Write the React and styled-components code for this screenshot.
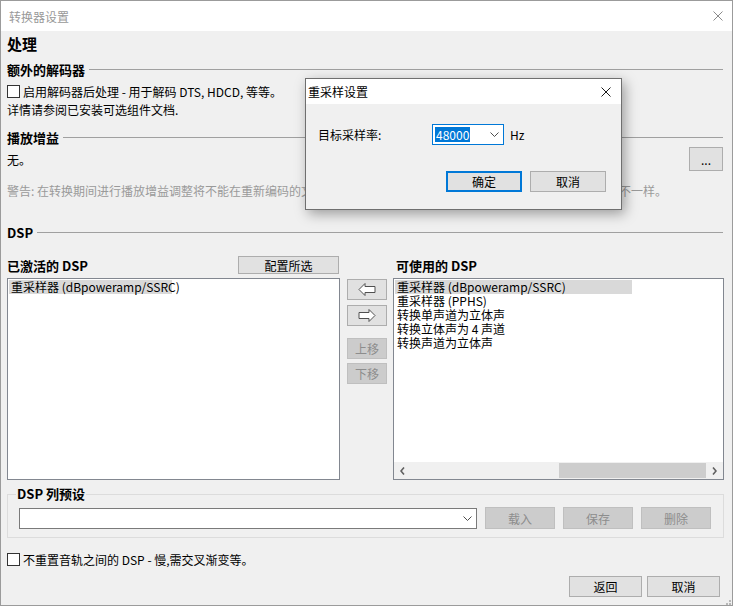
import React from 'react';
import styled, { createGlobalStyle, css } from 'styled-components';

const Global = createGlobalStyle`
  html, body { margin: 0; padding: 0; background: #ffffff; }
  body {
    font-family: "Noto Sans CJK SC", "Liberation Sans", sans-serif;
    font-size: 12px;
    color: #000;
  }
  * { box-sizing: border-box; }
`;

const Window = styled.div`
  position: relative;
  width: 733px;
  height: 606px;
  border: 1px solid #9b9b9b;
  background: #f0f0f0;
  display: flex;
  flex-direction: column;
  overflow: hidden;
`;

const TitleBar = styled.div`
  height: 30px;
  flex: none;
  background: ${p => p.$bg || '#ffffff'};
  display: flex;
  align-items: center;
  justify-content: space-between;
  padding: 0 ${p => p.$pr || 9}px 0 ${p => p.$pl || 8}px;
  color: ${p => p.$color || '#999999'};
  font-size: 12px;
`;

const CloseIcon = ({ color = '#8a8a8a', size = 10 }) => (
  <svg width={size} height={size} viewBox="0 0 10 10">
    <path d="M0.5 0.5 L9.5 9.5 M9.5 0.5 L0.5 9.5" stroke={color} strokeWidth="1" fill="none" />
  </svg>
);

const Body = styled.div`
  flex: 1;
  display: flex;
  flex-direction: column;
  padding: 0 8px 0 6px;
`;

const Heading = styled.div`
  height: 25px;
  line-height: 25px;
  font-size: 15px;
  font-weight: bold;
`;

const SectionHeader = styled.div`
  display: flex;
  align-items: center;
  gap: 4px;
  height: ${p => p.$h || 20}px;
  margin-top: ${p => p.$mt || 0}px;
  font-size: 13px;
  font-weight: bold;
  padding-right: 1px;
  &::after {
    content: '';
    flex: 1;
    height: 1px;
    background: #a0a0a0;
  }
`;

const Row = styled.div`
  display: flex;
  align-items: center;
  height: ${p => p.$h || 16}px;
  margin-top: ${p => p.$mt || 0}px;
  gap: ${p => p.$gap || 0}px;
  color: ${p => p.$muted ? '#9a9a9a' : '#000'};
  white-space: nowrap;
`;

const Spacer = styled.div`
  flex: 1;
`;

const CheckBox = styled.span`
  display: inline-block;
  width: 13px;
  height: 13px;
  border: 1px solid #333333;
  background: #ffffff;
  flex: none;
  margin-right: 3px;
`;

const Btn = styled.button`
  font: inherit;
  font-size: 12px;
  width: ${p => p.$w}px;
  height: ${p => p.$h || 21}px;
  padding: 0;
  margin: 0;
  flex: none;
  display: flex;
  align-items: center;
  justify-content: center;
  background: ${p => p.disabled ? '#cccccc' : '#e1e1e1'};
  border: 1px solid ${p => p.disabled ? '#bfbfbf' : '#adadad'};
  color: ${p => p.disabled ? '#8d8d8d' : '#000'};
  ${p => p.$primary && css`
    border: 2px solid #0078d7;
  `}
`;

const DspArea = styled.div`
  display: grid;
  grid-template-columns: 333px 53px 331px;
`;

const LabelsRow = styled(DspArea)`
  margin-top: 14px;
  height: 18px;
  align-items: center;
`;

const SubLabel = styled.div`
  font-size: 13px;
  font-weight: bold;
  padding-left: ${p => p.$pl || 0}px;
  display: flex;
  align-items: center;
  justify-content: space-between;
  height: 18px;
`;

const ListsRow = styled(DspArea)`
  margin-top: 4px;
  height: 202px;
`;

const ListBox = styled.div`
  height: 202px;
  background: #ffffff;
  border: 1px solid #828790;
  display: flex;
  flex-direction: column;
  overflow: hidden;
`;

const Items = styled.div`
  flex: 1;
  padding: 1px;
`;

const Item = styled.div`
  height: 14px;
  line-height: 14px;
  white-space: nowrap;
  padding-left: 2px;
  width: ${p => p.$w ? `${p.$w}px` : 'auto'};
  background: ${p => p.$sel ? '#d9d9d9' : 'transparent'};
`;

const HScroll = styled.div`
  height: 17px;
  flex: none;
  background: #f0f0f0;
  display: flex;
  align-items: center;
`;

const ScrollArrow = styled.div`
  width: 17px;
  height: 17px;
  flex: none;
  display: flex;
  align-items: center;
  justify-content: center;
`;

const Track = styled.div`
  flex: 1;
  display: flex;
  height: 15px;
`;

const Thumb = styled.div`
  flex: 1;
  background: #cdcdcd;
`;

const MidCol = styled.div`
  display: flex;
  flex-direction: column;
  padding: 1px 6px 0 7px;
`;

const MidBtn = styled(Btn)`
  margin-top: ${p => p.$mt || 0}px;
`;

const GroupBox = styled.fieldset`
  margin: 7px 0 0 0;
  padding: 6px 12px 8px 11px;
  border: 1px solid #dcdcdc;
  min-width: 0;
`;

const Legend = styled.legend`
  font-size: 13px;
  font-weight: bold;
  line-height: 14px;
  padding: 0 1px;
  margin-left: -3px;
`;

const Combo = styled.div`
  display: flex;
  align-items: center;
  width: ${p => p.$w}px;
  height: 21px;
  background: #ffffff;
  border: 1px solid ${p => p.$focus ? '#0078d7' : '#7a7a7a'};
  padding: 0 4px 0 2px;
  flex: none;
`;

const Selected = styled.span`
  background: #0078d7;
  color: #ffffff;
  height: 15px;
  line-height: 15px;
  padding: 0 1px;
`;

const Chevron = () => (
  <svg width="9" height="5" viewBox="0 0 9 5">
    <path d="M0.5 0.5 L4.5 4.5 L8.5 0.5" stroke="#4d4d4d" strokeWidth="1" fill="none" />
  </svg>
);

const ScrollChevron = ({ dir }) => (
  <svg width="5" height="8" viewBox="0 0 5 8">
    <path
      d={dir === 'left' ? 'M4 0.5 L1 4 L4 7.5' : 'M1 0.5 L4 4 L1 7.5'}
      stroke="#606060"
      strokeWidth="1.6"
      fill="none"
    />
  </svg>
);

const HollowArrow = ({ dir }) => (
  <svg width="18" height="13" viewBox="0 0 18 13">
    <polygon
      points={dir === 'left'
        ? '1,6.5 7,0.5 7,3.5 17,3.5 17,9.5 7,9.5 7,12.5'
        : '17,6.5 11,0.5 11,3.5 1,3.5 1,9.5 11,9.5 11,12.5'}
      fill="#ffffff"
      stroke="#505050"
      strokeWidth="1"
    />
  </svg>
);

const PresetRow = styled.div`
  display: flex;
  align-items: center;
  height: 22px;
  gap: 8px;
`;

const Footer = styled.div`
  display: flex;
  justify-content: flex-end;
  gap: 5px;
  margin-top: 9px;
  padding-right: 4px;
`;

const Grip = styled.div`
  position: absolute;
  right: 1px;
  bottom: 1px;
  width: 10px;
  height: 10px;
`;

/* Modal resampler dialog floating above the converter window */
const Dialog = styled.div`
  position: absolute;
  left: 304px;
  top: 77px;
  width: 317px;
  height: 132px;
  background: #f0f0f0;
  border: 1px solid #6f6f6f;
  box-shadow: 3px 4px 12px rgba(0, 0, 0, 0.35);
  display: flex;
  flex-direction: column;
`;

const DialogBar = styled(TitleBar)`
  height: 25px;
  color: #000;
  padding: 0 10px 0 2px;
`;

const DialogBody = styled.div`
  flex: 1;
  padding: 20px 15px 0 12px;
  display: flex;
  flex-direction: column;
`;

const FieldLabel = styled.span`
  width: 114px;
  flex: none;
`;

const DialogButtons = styled.div`
  display: flex;
  justify-content: flex-end;
  gap: 8px;
  margin-top: 26px;
`;

export default function App() {
  return (
    <>
      <Global />
      <Window>
        <TitleBar>
          <span>转换器设置</span>
          <CloseIcon />
        </TitleBar>
        <Body>
          <Heading>处理</Heading>
          <SectionHeader $h={26}>额外的解码器</SectionHeader>
          <Row $h={19}>
            <CheckBox />
            启用解码器后处理 - 用于解码 DTS, HDCD, 等等。
          </Row>
          <Row $h={16}>详情请参阅已安装可选组件文档.</Row>

          <SectionHeader $h={19} $mt={11}>播放增益</SectionHeader>
          <Row $h={24}>
            <span>无。</span>
            <Spacer />
            <Btn $w={34} $h={24} style={{ marginRight: 1 }}>...</Btn>
          </Row>
          <Row $h={18} $mt={10} $muted>
            警告: 在转换期间进行播放增益调整将不能在重新编码的文件中撤销, 因此结果可能会与在播放时使用播放增益调整时不一样。
          </Row>

          <SectionHeader $h={20} $mt={23}>DSP</SectionHeader>

          <LabelsRow>
            <SubLabel>
              <span>已激活的 DSP</span>
              <Btn $w={101} $h={18} style={{ fontWeight: 'normal', marginRight: 1 }}>配置所选</Btn>
            </SubLabel>
            <div />
            <SubLabel $pl={3}>可使用的 DSP</SubLabel>
          </LabelsRow>

          <ListsRow>
            <ListBox>
              <Items>
                <Item $sel $w={163}>重采样器 (dBpoweramp/SSRC)</Item>
              </Items>
            </ListBox>
            <MidCol>
              <MidBtn $w={40}><HollowArrow dir="left" /></MidBtn>
              <MidBtn $w={40} $mt={5}><HollowArrow dir="right" /></MidBtn>
              <MidBtn $w={40} $mt={12} disabled>上移</MidBtn>
              <MidBtn $w={40} $mt={4} disabled>下移</MidBtn>
            </MidCol>
            <ListBox>
              <Items>
                <Item $sel $w={237}>重采样器 (dBpoweramp/SSRC)</Item>
                <Item>重采样器 (PPHS)</Item>
                <Item>转换单声道为立体声</Item>
                <Item>转换立体声为 4 声道</Item>
                <Item>转换声道为立体声</Item>
              </Items>
              <HScroll>
                <ScrollArrow><ScrollChevron dir="left" /></ScrollArrow>
                <Track>
                  <Spacer />
                  <Thumb />
                </Track>
                <ScrollArrow><ScrollChevron dir="right" /></ScrollArrow>
              </HScroll>
            </ListBox>
          </ListsRow>

          <GroupBox>
            <Legend>DSP 列预设</Legend>
            <PresetRow>
              <Combo $w={458}>
                <Spacer />
                <Chevron />
              </Combo>
              <Btn $w={70} $h={22} disabled>载入</Btn>
              <Btn $w={70} $h={22} disabled>保存</Btn>
              <Btn $w={70} $h={22} disabled>删除</Btn>
            </PresetRow>
          </GroupBox>

          <Row $h={15} $mt={14}>
            <CheckBox />
            不重置音轨之间的 DSP - 慢,需交叉渐变等。
          </Row>

          <Footer>
            <Btn $w={73}>返回</Btn>
            <Btn $w={73}>取消</Btn>
          </Footer>
        </Body>

        <Grip>
          <svg width="10" height="10" viewBox="0 0 10 10">
            {[[8, 2], [8, 5], [5, 5], [8, 8], [5, 8], [2, 8]].map(([x, y]) => (
              <rect key={`${x}-${y}`} x={x} y={y} width="2" height="2" fill="#b8b8b8" />
            ))}
          </svg>
        </Grip>

        <Dialog>
          <DialogBar>
            <span>重采样设置</span>
            <CloseIcon color="#1a1a1a" size={10} />
          </DialogBar>
          <DialogBody>
            <Row $h={21}>
              <FieldLabel>目标采样率:</FieldLabel>
              <Combo $w={72} $focus>
                <Selected>48000</Selected>
                <Spacer />
                <Chevron />
              </Combo>
              <span style={{ marginLeft: 6 }}>Hz</span>
            </Row>
            <DialogButtons>
              <Btn $w={76} $primary>确定</Btn>
              <Btn $w={76}>取消</Btn>
            </DialogButtons>
          </DialogBody>
        </Dialog>
      </Window>
    </>
  );
}
